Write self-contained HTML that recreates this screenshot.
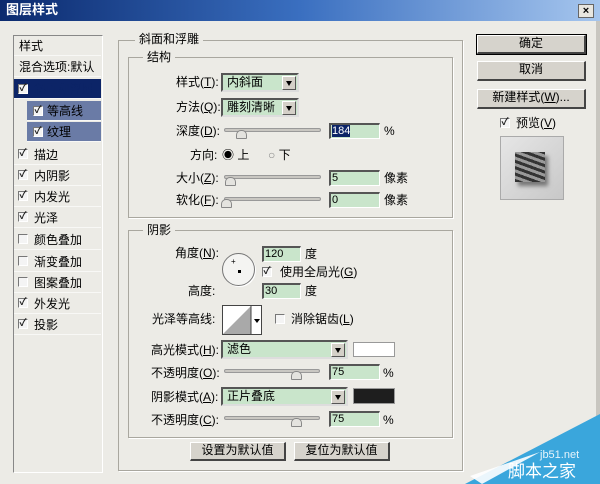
<!DOCTYPE html>
<html><head><meta charset="utf-8"><style>
*{margin:0;padding:0;box-sizing:border-box}
body{width:600px;height:484px;overflow:hidden;background:#ecebe6;font-family:"Liberation Sans","Noto Sans CJK SC",sans-serif;font-size:12px;color:#000;position:relative}
.a{position:absolute;white-space:nowrap;line-height:14px}
.title{left:0;top:0;width:600px;height:21px;background:linear-gradient(90deg,#0b2a6e 0%,#3a6fc0 50%,#a6c6ee 100%);}
.box{position:absolute;border:1px solid #a9a79f;box-shadow:1px 1px 0 #fff}
.lg{position:absolute;background:#ecebe6;padding:0 4px;font-size:12px;line-height:14px}
.li{position:absolute;left:14px;width:87px;height:20px;border-bottom:1px solid #f8f8f6;line-height:20px;padding-left:20px}
.cb{position:absolute;width:10px;height:10px;border:1px solid #777;border-right-color:#fff;border-bottom-color:#fff;background:#f4f4f4;font-size:10px;line-height:8px;text-align:center;font-weight:bold;color:#222}
.in{position:absolute;background:#c9e5cb;border:1px solid #777;border-top:2px solid #555;border-left:2px solid #555;border-right-color:#fff;border-bottom-color:#fff;line-height:13px;padding-left:1px;font-size:11px}
.sel{position:absolute;background:#c9e5cb;border:2px solid #555;border-right-color:#ddd;border-bottom-color:#ddd;line-height:14px;padding-left:4px}
.dd{position:absolute;right:1px;top:1px;width:14px;height:14px;background:#d4d0c8;border:1px solid #fff;border-right-color:#555;border-bottom-color:#555}
.dd:after{content:"";position:absolute;left:3px;top:4px;border:3px solid transparent;border-top:5px solid #000}
.tr{position:absolute;height:4px;background:#c9c7c2;border:1px solid #999;border-radius:2px}
.th{position:absolute;width:11px;height:9px;background:#e4e3df;border:1px solid #888;border-radius:5px 5px 1px 1px}
.btn{position:absolute;background:#d6d3cc;border:1px solid #fff;border-right:2px solid #444;border-bottom:2px solid #444;text-align:center;line-height:15px}
</style></head><body>
<div class="a title"></div>
<div class="a" style="left:6px;top:3px;color:#fff;font-weight:bold;font-size:13px">图层样式</div>
<div class="a" style="left:578px;top:4px;width:16px;height:14px;background:#e8e6e0;border:1px solid #666;text-align:center;line-height:12px;font-weight:bold;font-size:11px">×</div>
<div class="a" style="left:596px;top:21px;width:4px;height:463px;background:#c8c6c0"></div>

<div class="a" style="left:13px;top:35px;width:90px;height:438px;background:#ecebe6;border:1px solid #888;border-right-color:#fff;border-bottom-color:#fff"></div>
<div class="li" style="top:36px;padding-left:5px">样式</div>
<div class="li" style="top:57px;padding-left:5px">混合选项:默认</div>
<div class="li" style="top:79px;background:#0c2467;color:#0c2467">斜面和浮雕</div>
<div class="cb" style="left:18px;top:84px">✓</div>
<div class="li" style="top:101px;left:27px;width:74px;background:#6a7ba6;padding-left:20px">等高线</div>
<div class="cb" style="left:33px;top:106px">✓</div>
<div class="li" style="top:122px;left:27px;width:74px;background:#6a7ba6;padding-left:20px">纹理</div>
<div class="cb" style="left:33px;top:127px">✓</div>
<div class="li" style="top:145px">描边</div><div class="cb" style="left:18px;top:149px">✓</div>
<div class="li" style="top:166px">内阴影</div><div class="cb" style="left:18px;top:170px">✓</div>
<div class="li" style="top:187px">内发光</div><div class="cb" style="left:18px;top:191px">✓</div>
<div class="li" style="top:208px">光泽</div><div class="cb" style="left:18px;top:212px">✓</div>
<div class="li" style="top:230px">颜色叠加</div><div class="cb" style="left:18px;top:234px"></div>
<div class="li" style="top:252px">渐变叠加</div><div class="cb" style="left:18px;top:256px"></div>
<div class="li" style="top:273px">图案叠加</div><div class="cb" style="left:18px;top:277px"></div>
<div class="li" style="top:294px">外发光</div><div class="cb" style="left:18px;top:298px">✓</div>
<div class="li" style="top:315px">投影</div><div class="cb" style="left:18px;top:319px">✓</div>

<div class="box" style="left:118px;top:40px;width:345px;height:431px"></div>
<div class="lg" style="left:135px;top:32px">斜面和浮雕</div>
<div class="box" style="left:128px;top:57px;width:325px;height:161px"></div>
<div class="lg" style="left:143px;top:50px">结构</div>

<div class="a" style="left:176px;top:75px">样式(<u>T</u>):</div>
<div class="sel" style="left:221px;top:73px;width:78px;height:19px">内斜面<div class="dd"></div></div>
<div class="a" style="left:176px;top:100px">方法(<u>Q</u>):</div>
<div class="sel" style="left:221px;top:98px;width:78px;height:19px">雕刻清晰<div class="dd"></div></div>
<div class="a" style="left:176px;top:124px">深度(<u>D</u>):</div>
<div class="tr" style="left:224px;top:128px;width:97px"></div><div class="th" style="left:236px;top:130px"></div>
<div class="in" style="left:329px;top:123px;width:51px;height:16px"><span style="background:#0c2467;color:#fff">184</span></div>
<div class="a" style="left:384px;top:124px">%</div>
<div class="a" style="left:190px;top:148px">方向:</div>
<div class="a" style="left:222px;top:148px">◉ 上</div>
<div class="a" style="left:268px;top:148px;color:#888">○ <span style="color:#000">下</span></div>
<div class="a" style="left:176px;top:171px">大小(<u>Z</u>):</div>
<div class="tr" style="left:224px;top:175px;width:97px"></div><div class="th" style="left:225px;top:177px"></div>
<div class="in" style="left:329px;top:170px;width:51px;height:16px">5</div>
<div class="a" style="left:384px;top:171px">像素</div>
<div class="a" style="left:176px;top:193px">软化(<u>F</u>):</div>
<div class="tr" style="left:224px;top:197px;width:97px"></div><div class="th" style="left:221px;top:199px"></div>
<div class="in" style="left:329px;top:192px;width:51px;height:16px">0</div>
<div class="a" style="left:384px;top:193px">像素</div>

<div class="box" style="left:128px;top:230px;width:325px;height:208px"></div>
<div class="lg" style="left:143px;top:223px">阴影</div>
<div class="a" style="left:175px;top:246px">角度(<u>N</u>):</div>
<div class="a" style="left:222px;top:253px;width:33px;height:33px;border-radius:50%;border:1px solid #777;background:#f4f4f2;box-shadow:1px 1px 0 #fff"></div>
<div class="a" style="left:238px;top:270px;width:3px;height:3px;background:#000"></div>
<div class="a" style="left:231px;top:258px;font-size:8px;line-height:8px">+</div>
<div class="in" style="left:262px;top:246px;width:39px;height:16px">120</div>
<div class="a" style="left:305px;top:247px">度</div>
<div class="cb" style="left:262px;top:267px">✓</div>
<div class="a" style="left:280px;top:265px">使用全局光(<u>G</u>)</div>
<div class="a" style="left:188px;top:284px">高度:</div>
<div class="in" style="left:262px;top:283px;width:39px;height:16px">30</div>
<div class="a" style="left:305px;top:284px">度</div>
<div class="a" style="left:152px;top:312px">光泽等高线:</div>
<div class="a" style="left:222px;top:305px;width:40px;height:30px;border:1px solid #444;background:#fff;overflow:hidden">
<svg width="40" height="30" style="position:absolute;left:0;top:0"><polygon points="0,28 28,0 28,28" fill="#a9a9a9"/><line x1="28" y1="0" x2="28" y2="30" stroke="#444"/><polygon points="31,13 37,13 34,17" fill="#000"/></svg></div>
<div class="cb" style="left:275px;top:314px"></div>
<div class="a" style="left:291px;top:312px">消除锯齿(<u>L</u>)</div>
<div class="a" style="left:151px;top:343px">高光模式(<u>H</u>):</div>
<div class="sel" style="left:221px;top:340px;width:127px;height:19px">滤色<div class="dd"></div></div>
<div class="a" style="left:353px;top:342px;width:42px;height:15px;background:#fff;border:1px solid #999"></div>
<div class="a" style="left:151px;top:366px">不透明度(<u>O</u>):</div>
<div class="tr" style="left:224px;top:369px;width:96px"></div><div class="th" style="left:291px;top:371px"></div>
<div class="in" style="left:329px;top:364px;width:51px;height:16px">75</div>
<div class="a" style="left:383px;top:366px">%</div>
<div class="a" style="left:151px;top:390px">阴影模式(<u>A</u>):</div>
<div class="sel" style="left:221px;top:387px;width:127px;height:19px">正片叠底<div class="dd"></div></div>
<div class="a" style="left:353px;top:388px;width:42px;height:16px;background:#1e1e1e;border:1px solid #999"></div>
<div class="a" style="left:151px;top:413px">不透明度(<u>C</u>):</div>
<div class="tr" style="left:224px;top:416px;width:96px"></div><div class="th" style="left:291px;top:418px"></div>
<div class="in" style="left:329px;top:411px;width:51px;height:16px">75</div>
<div class="a" style="left:383px;top:413px">%</div>
<div class="btn" style="left:190px;top:442px;width:96px;height:19px">设置为默认值</div>
<div class="btn" style="left:294px;top:442px;width:96px;height:19px">复位为默认值</div>

<div class="btn" style="left:477px;top:35px;width:109px;height:19px;outline:1px solid #000">确定</div>
<div class="btn" style="left:477px;top:61px;width:109px;height:20px">取消</div>
<div class="btn" style="left:477px;top:89px;width:109px;height:20px">新建样式(<u>W</u>)...</div>
<div class="cb" style="left:500px;top:118px">✓</div>
<div class="a" style="left:516px;top:116px">预览(<u>V</u>)</div>
<div class="a" style="left:500px;top:136px;width:64px;height:64px;background:linear-gradient(135deg,#e6e6e6,#c8c8c8);border:1px solid #aaa"></div>
<div class="a" style="left:515px;top:152px;width:30px;height:30px;background:repeating-linear-gradient(20deg,#333 0 3px,#999 3px 6px);box-shadow:3px 4px 4px #777"></div>

<svg class="a" style="left:420px;top:410px" width="180" height="74"><polygon points="45,74 180,4 180,74" fill="#3aa6dc"/><polygon points="50,66 120,42 62,74" fill="#fff" opacity=".9"/></svg>
<div class="a" style="left:540px;top:448px;color:#e6f4fb;font-size:11px">jb51.net</div>
<div class="a" style="left:508px;top:462px;color:#fff;font-size:17px;line-height:20px">脚本之家</div>
</body></html>
